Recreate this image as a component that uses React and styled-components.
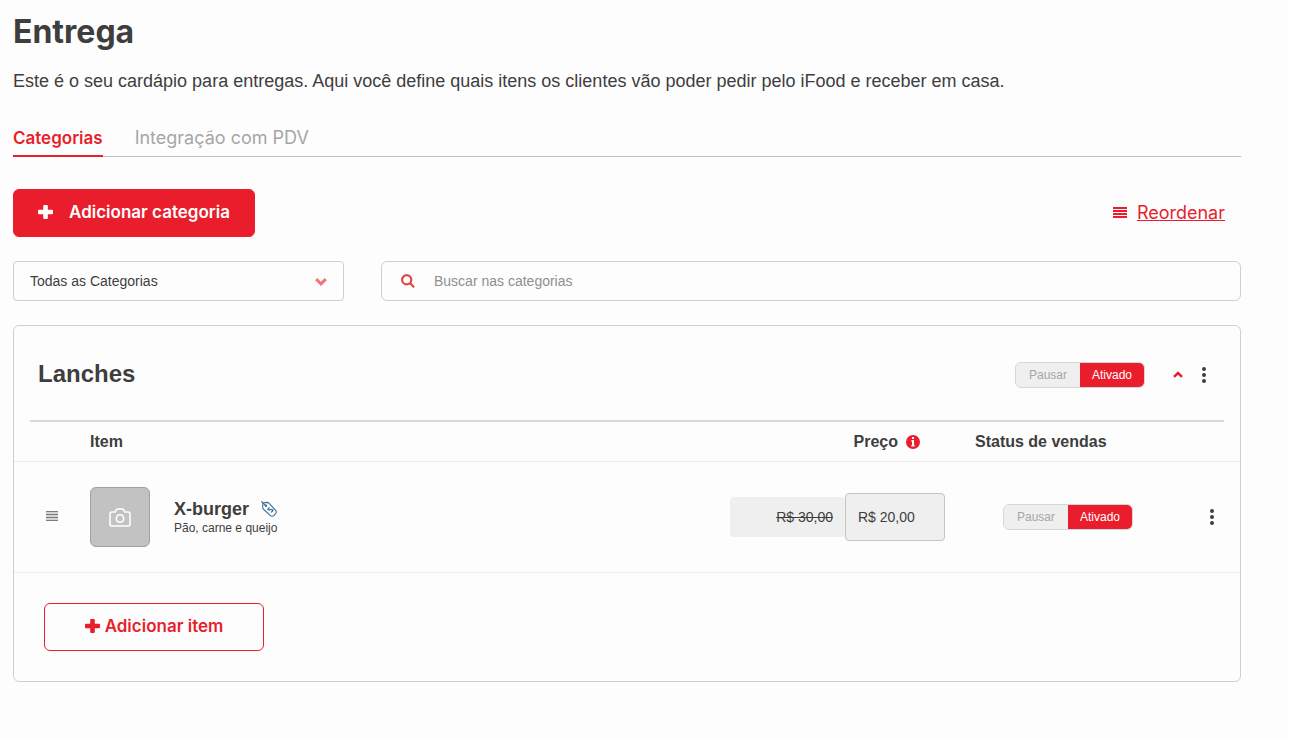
import { useState } from "react"
import styled, { createGlobalStyle } from "styled-components"

const GlobalStyle = createGlobalStyle`
    * {
        box-sizing: border-box;
    }

    body {
        margin: 0;
        background: #fdfdfd;
        color: #3e3e3e;
        font-family: "Liberation Sans", Arial, sans-serif;
    }

    button, input, select {
        font-family: inherit;
    }

    svg {
        display: block;
        flex: none;
    }
`

const titleFont = `Inter, "Open Sans", sans-serif`

const Page = styled.main`
    padding: 12px 48px 48px 13px;
`

const Title = styled.h1`
    margin: 0;
    font-family: ${titleFont};
    font-size: 32px;
    font-weight: 700;
    line-height: 40px;
`

const Description = styled.p`
    margin: 17px 0 0;
    font-size: 18px;
    line-height: 24px;
`

const Tabs = styled.nav`
    display: flex;
    gap: 32px;
    margin-top: 31px;
    border-bottom: 1px solid #bcbcbc;
`

const Tab = styled.a`
    height: 33px;
    margin-bottom: -1px;
    border-bottom: 2px solid ${({ $active }) => ($active ? "#ea1d2c" : "transparent")};
    color: ${({ $active }) => ($active ? "#ea1d2c" : "#a6a6a6")};
    font-family: ${titleFont};
    font-size: ${({ $active }) => ($active ? 17 : 18)}px;
    font-weight: ${({ $active }) => ($active ? 600 : 400)};
    line-height: 28px;
    text-decoration: none;
`

const Toolbar = styled.div`
    display: flex;
    align-items: center;
    justify-content: space-between;
    margin-top: 32px;
    padding-right: 16px;
`

const Button = styled.button`
    display: flex;
    align-items: center;
    justify-content: center;
    gap: ${({ $outline }) => ($outline ? 5 : 16)}px;
    min-width: ${({ $outline }) => ($outline ? 220 : 242)}px;
    height: 48px;
    padding: 0 16px 2px;
    border: 1px solid #ea1d2c;
    border-radius: 6px;
    background: ${({ $outline }) => ($outline ? "transparent" : "#ea1d2c")};
    color: ${({ $outline }) => ($outline ? "#ea1d2c" : "#fff")};
    font-family: ${titleFont};
    font-size: 17px;
    font-weight: 600;
    cursor: pointer;
`

const ReorderLink = styled.a`
    display: flex;
    align-items: center;
    gap: 10px;
    padding-bottom: 2px;
    color: #ea1d2c;
    font-family: ${titleFont};
    font-size: 18px;
    text-decoration: none;

    span {
        text-decoration: underline;
    }
`

const Filters = styled.div`
    display: grid;
    grid-template-columns: 331px 1fr;
    gap: 37px;
    margin-top: 24px;
`

const SelectBox = styled.div`
    position: relative;

    svg {
        position: absolute;
        top: 17px;
        right: 17px;
        pointer-events: none;
    }
`

const Select = styled.select`
    display: block;
    width: 100%;
    height: 40px;
    padding: 0 40px 0 16px;
    border: 1px solid #cfcfcf;
    border-radius: 4px;
    appearance: none;
    background: transparent;
    color: #3e3e3e;
    font-size: 14px;
`

const SearchBox = styled.label`
    display: flex;
    align-items: center;
    gap: 19px;
    height: 40px;
    padding: 0 19px;
    border: 1px solid #cfcfcf;
    border-radius: 6px;
`

const SearchInput = styled.input`
    flex: 1;
    padding: 0;
    border: 0;
    outline: 0;
    background: transparent;
    color: #3e3e3e;
    font-size: 14px;

    &::placeholder {
        color: #8f8f8f;
    }
`

const Card = styled.section`
    margin-top: 24px;
    border: 1px solid #cfcfcf;
    border-radius: 6px;
`

const CardHeader = styled.header`
    display: flex;
    align-items: center;
    height: 96px;
    margin: 0 16px;
    padding: 4px 8px 0;
    border-bottom: 2px solid #d9d9d9;
`

const CardTitle = styled.h2`
    flex: 1;
    margin: 0;
    padding-bottom: 2px;
    font-size: 24px;
    line-height: 28px;
`

const IconButton = styled.button`
    display: grid;
    place-items: center;
    width: 24px;
    height: 24px;
    padding: 0;
    border: 0;
    background: transparent;
    color: ${({ $red }) => ($red ? "#ea1d2c" : "#3e3e3e")};
    cursor: pointer;
`

const HeaderActions = styled.div`
    display: flex;
    align-items: center;
    gap: 2px;
    margin-left: 21px;
    padding-bottom: 1px;
`

const Toggle = styled.div`
    display: inline-grid;
    grid-template-columns: 64px 64px;
    width: 130px;
    height: 26px;
    overflow: hidden;
    border: 1px solid #d6d6d6;
    border-radius: 6px;
    background: #efefef;
    vertical-align: middle;
`

const ToggleOption = styled.button`
    padding: 0;
    border: 0;
    background: ${({ $active }) => ($active ? "#ea1d2c" : "#efefef")};
    color: ${({ $active }) => ($active ? "#fff" : "#a6a6a6")};
    font-size: 12px;
    cursor: pointer;
`

const Table = styled.table`
    width: 100%;
    border-collapse: separate;
    border-spacing: 0;
    table-layout: fixed;
`

const HeadCell = styled.th`
    width: ${({ $width }) => $width || "auto"};
    height: 40px;
    padding: 0 ${({ $right }) => $right || 0}px 0 ${({ $left }) => $left || 0}px;
    border-bottom: 1px solid #ededed;
    font-size: 16px;
    text-align: ${({ $align }) => $align || "left"};
`

const PriceLabel = styled.span`
    display: inline-flex;
    align-items: center;
    gap: 8px;
`

const Cell = styled.td`
    height: 111px;
    padding: 0 0 0 ${({ $left }) => $left || 0}px;
    border-bottom: 1px solid #ededed;
`

const Product = styled.div`
    display: flex;
    align-items: center;
    gap: 24px;
`

const Photo = styled.button`
    display: grid;
    place-items: center;
    width: 60px;
    height: 60px;
    padding: 0;
    border: 1px solid #a0a0a0;
    border-radius: 6px;
    background: #c2c2c2;
    cursor: pointer;
`

const ProductName = styled.div`
    display: flex;
    align-items: center;
    gap: 12px;
    font-size: 18px;
    font-weight: bold;
    line-height: 22px;
`

const ProductText = styled.div`
    font-size: 12px;
    line-height: 16px;
`

const Prices = styled.div`
    display: flex;
    align-items: center;
`

const OldPrice = styled.input`
    width: 115px;
    height: 40px;
    padding: 0 12px;
    border: 0;
    border-radius: 4px;
    background: #efefef;
    color: #3e3e3e;
    font-size: 14px;
    text-align: right;
    text-decoration: line-through;
`

const Price = styled.input`
    width: 100px;
    height: 48px;
    padding: 0 12px;
    border: 1px solid #c4c4c4;
    border-radius: 4px;
    background: #efefef;
    color: #3e3e3e;
    font-size: 14px;
`

const CardFooter = styled.footer`
    padding: 30px;
`

const PlusIcon = () => (
    <svg width="15" height="14" viewBox="0 0 15 14" fill="currentColor">
        <path d="M6.2 0h2.6q1 0 1 1v3.8H14q1 0 1 1v2.400q0 1-1 1H9.800V13q0 1-1 1H6.200q-1 0-1-1V9.200H1q-1 0-1-1V5.800q0-1 1-1h4.200V1q0-1 1-1z" />
    </svg>
)

const LinesIcon = () => (
    <svg width="14" height="11" fill="currentColor" shapeRendering="crispEdges">
        {[0, 3, 6, 9].map((y) => (
            <rect key={y} y={y} width="14" height="2" />
        ))}
    </svg>
)

const DragIcon = () => (
    <svg width="12" height="12" viewBox="0 0 12 12" fill="#7d7d7d" shapeRendering="crispEdges">
        <rect width="12" height="10" fill="#d4d4d4" />
        {[0, 3, 6, 9].map((y) => (
            <rect key={y} y={y} width="12" height="1" />
        ))}
    </svg>
)

const ChevronIcon = ({ width = 12, height = 8, color = "currentColor", up }) => (
    <svg width={width} height={height} viewBox="0 0 12 8" fill="none" stroke={color} strokeWidth="3">
        <path d={up ? "M1.200 6.800L6 2.200l4.800 4.600" : "M1.200 1.200L6 5.800l4.800-4.600"} />
    </svg>
)

const DotsIcon = () => (
    <svg width="4" height="16" viewBox="0 0 4 16" fill="currentColor">
        <circle cx="2" cy="2" r="2" />
        <circle cx="2" cy="8" r="2" />
        <circle cx="2" cy="14" r="2" />
    </svg>
)

const SearchIcon = () => (
    <svg width="14" height="14" viewBox="0 0 14 14" fill="none" stroke="#dc4a44" strokeWidth="2.200">
        <circle cx="5.700" cy="5.800" r="4.600" />
        <path d="M9.200 9.300l3.300 3.400" strokeLinecap="round" />
    </svg>
)

const InfoIcon = () => (
    <svg width="14" height="14" viewBox="0 0 14 14">
        <circle cx="7" cy="7" r="7" fill="#ea1d2c" />
        <path d="M6 2h2v2H6zM6 5h2v5h.600v1.500H5.400V10H6V6.500h-.600V5z" fill="#fff" />
    </svg>
)

const CameraIcon = () => (
    <svg width="22" height="19" viewBox="0 0 22 19" fill="none" stroke="#fff" strokeWidth="1.600">
        <path
            d="M3 4h3.200l1.100-2.200Q7.700 1 8.500 1h5q.8 0 1.200.8L15.800 4H19q2 0 2 2v10q0 2-2 2H3q-2 0-2-2V6q0-2 2-2z"
            strokeLinejoin="round"
        />
        <circle cx="11" cy="10.500" r="3.700" />
    </svg>
)

const TagIcon = () => (
    <svg width="16" height="16" viewBox="0 0 16 16" fill="none" stroke="#3c7098" strokeWidth="1.100">
        <path d="M1.800 2.800q0-1 1-1.100l3.400-.3q1 0 1.700.7l6.400 6.800q1.800 2 .3 3.800l-1.500 1.700q-2 1.700-4 0L2.300 8q-.7-.7-.6-1.700z" />
        <path d="M.200.200l4.300 4.300" />
        <circle cx="5" cy="4.800" r="1.200" fill="#3c7098" stroke="none" />
        <path d="M8.800 6.800q-1.800.2-1.300 1.800.6 1 1.800.2 1.500-1 2.200.3.300 1.700-1.500 1.900M6.300 8.300l1.100-.2M11.400 9.400l1.100-.500" strokeWidth="1.300" />
    </svg>
)

const StatusToggle = ({ label }) => {
    const [active, setActive] = useState(true)

    return (
        <Toggle role="group" aria-label={label}>
            <ToggleOption type="button" $active={!active} aria-pressed={!active} onClick={() => setActive(false)}>
                Pausar
            </ToggleOption>
            <ToggleOption type="button" $active={active} aria-pressed={active} onClick={() => setActive(true)}>
                Ativado
            </ToggleOption>
        </Toggle>
    )
}

const Item = ({ name, description, oldPrice, price }) => (
    <tr>
        <Cell $left={32}>
            <DragIcon />
        </Cell>
        <Cell>
            <Product>
                <Photo type="button" aria-label="Adicionar foto">
                    <CameraIcon />
                </Photo>
                <div>
                    <ProductName>
                        {name}
                        <TagIcon />
                    </ProductName>
                    <ProductText>{description}</ProductText>
                </div>
            </Product>
        </Cell>
        <Cell>
            <Prices>
                <OldPrice aria-label="Preço original" defaultValue={oldPrice} />
                <Price aria-label="Preço com desconto" defaultValue={price} />
            </Prices>
        </Cell>
        <Cell $left={58}>
            <StatusToggle label={`Status de ${name}`} />
        </Cell>
        <Cell $left={20}>
            <IconButton type="button" aria-label="Opções do item">
                <DotsIcon />
            </IconButton>
        </Cell>
    </tr>
)

export default function App() {
    return (
        <Page>
            <GlobalStyle />
            <Title>Entrega</Title>
            <Description>
                Este é o seu cardápio para entregas. Aqui você define quais itens os clientes vão poder pedir pelo
                iFood e receber em casa.
            </Description>

            <Tabs>
                <Tab href="#categorias" $active>Categorias</Tab>
                <Tab href="#pdv">Integração com PDV</Tab>
            </Tabs>

            <Toolbar>
                <Button type="button">
                    <PlusIcon />
                    Adicionar categoria
                </Button>
                <ReorderLink href="#reordenar">
                    <LinesIcon />
                    <span>Reordenar</span>
                </ReorderLink>
            </Toolbar>

            <Filters>
                <SelectBox>
                    <Select aria-label="Categoria">
                        <option>Todas as Categorias</option>
                        <option>Lanches</option>
                    </Select>
                    <ChevronIcon color="#f0737c" />
                </SelectBox>
                <SearchBox>
                    <SearchIcon />
                    <SearchInput type="text" placeholder="Buscar nas categorias" aria-label="Buscar nas categorias" />
                </SearchBox>
            </Filters>

            <Card>
                <CardHeader>
                    <CardTitle>Lanches</CardTitle>
                    <StatusToggle label="Status de Lanches" />
                    <HeaderActions>
                        <IconButton type="button" $red aria-label="Recolher categoria">
                            <ChevronIcon width={10} height={7} up />
                        </IconButton>
                        <IconButton type="button" aria-label="Opções da categoria">
                            <DotsIcon />
                        </IconButton>
                    </HeaderActions>
                </CardHeader>

                <Table>
                    <thead>
                        <tr>
                            <HeadCell $width="76px" aria-label="Ordem" />
                            <HeadCell>Item</HeadCell>
                            <HeadCell $width="215px" $align="right" $right={25}>
                                <PriceLabel>
                                    Preço
                                    <InfoIcon />
                                </PriceLabel>
                            </HeadCell>
                            <HeadCell $width="235px" $left={30}>Status de vendas</HeadCell>
                            <HeadCell $width="60px" aria-label="Opções" />
                        </tr>
                    </thead>
                    <tbody>
                        <Item
                            name="X-burger"
                            description="Pão, carne e queijo"
                            oldPrice="R$ 30,00"
                            price="R$ 20,00"
                        />
                    </tbody>
                </Table>

                <CardFooter>
                    <Button type="button" $outline>
                        <PlusIcon />
                        Adicionar item
                    </Button>
                </CardFooter>
            </Card>
        </Page>
    )
}
